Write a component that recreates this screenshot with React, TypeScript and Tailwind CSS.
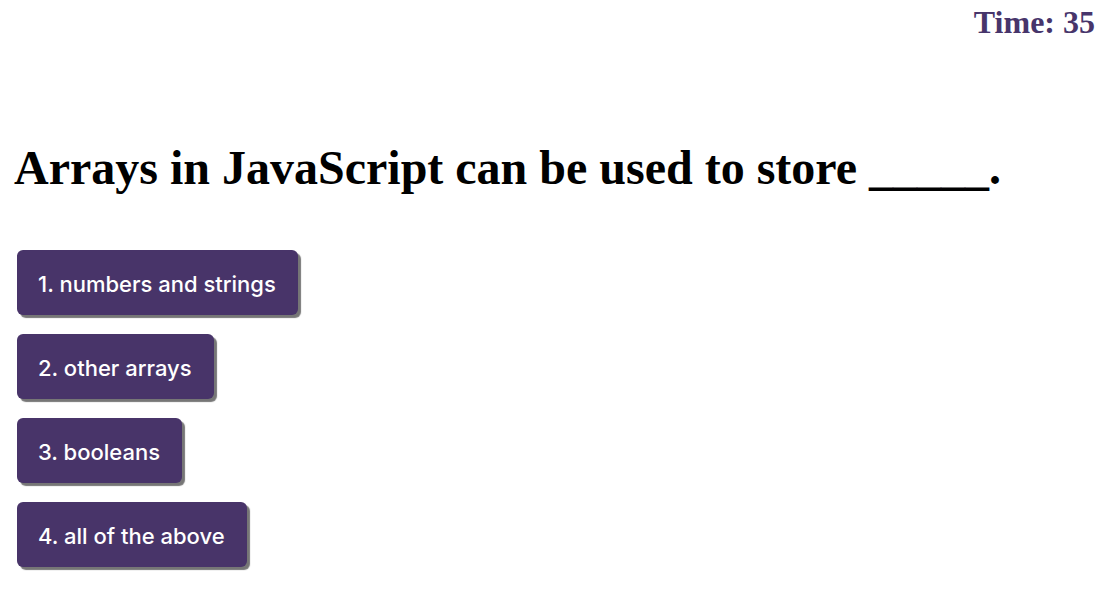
import React from "react";

const answers = ["1. numbers and strings", "2. other arrays", "3. booleans", "4. all of the above"];

export default function App() {
  return (
    <div className="w-[1108px] h-[604px] bg-white overflow-hidden" style={{ fontFamily: '"Liberation Serif", serif' }}>
      <div className="flex justify-end pr-[13px] pt-[2px]">
        <div className="text-[32px] font-bold text-[#47356b] leading-[40px]">Time: 35</div>
      </div>
      <h1 className="mt-[98px] ml-[14px] text-[48px] font-bold text-black leading-[56px]">
        Arrays in JavaScript can be used to store _____.
      </h1>
      <div className="mt-[54px] ml-[17px] flex flex-col items-start gap-[19px]">
        {answers.map((a) => (
          <button
            key={a}
            className="h-[65px] pt-[3px] pl-[21px] pr-[22px] rounded-[6px] bg-[#483469] text-white text-[22px] font-medium shadow-[3px_3px_1px_#767676]"
            style={{ fontFamily: 'Inter, "Noto Sans", sans-serif' }}
          >
            {a}
          </button>
        ))}
      </div>
    </div>
  );
}
